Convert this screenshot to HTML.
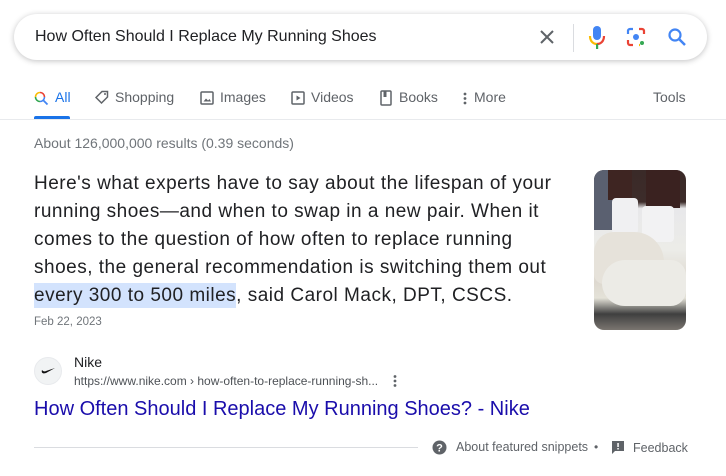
<!DOCTYPE html>
<html><head><meta charset="utf-8"><style>
*{margin:0;padding:0;box-sizing:border-box}
body{width:726px;height:476px;background:#fff;font-family:"Liberation Sans",Arial,sans-serif;position:relative;overflow:hidden;color:#202124}
.abs{position:absolute;white-space:nowrap}
.search{position:absolute;left:14px;top:14px;width:693px;height:46px;border-radius:24px;background:#fff;box-shadow:0 1px 6px rgba(32,33,36,.28)}
.tab{position:absolute;top:89px;font-size:14px;color:#5f6368}
.snip{font-size:19px;letter-spacing:0.5px;color:#202124;line-height:28px}
</style></head><body>
<div class="search"></div>
<div class="abs" style="left:35px;top:28px;font-size:16px;color:#202124">How Often Should I Replace My Running Shoes</div>
<svg class="abs" style="left:538px;top:28px" width="18" height="18" viewBox="0 0 18 18"><path d="M3 3L15 15M15 3L3 15" stroke="#5f6368" stroke-width="2"/></svg>
<div class="abs" style="left:573px;top:24px;width:1px;height:28px;background:#dadce0"></div>
<svg class="abs" style="left:588px;top:25px" width="18" height="26" viewBox="0 0 18 26"><rect x="5" y="1" width="8" height="14" rx="4" fill="#4285f4"/><path d="M2 11c0 5 3 8 7 8" stroke="#fbbc05" stroke-width="2.2" fill="none"/><path d="M16 11c0 5-3 8-7 8" stroke="#ea4335" stroke-width="2.2" fill="none"/><rect x="8" y="19" width="2.2" height="5" fill="#34a853"/></svg>
<svg class="abs" style="left:626px;top:27px" width="20" height="20" viewBox="0 0 20 20"><path d="M2 7V4a2 2 0 0 1 2-2h3" stroke="#4285f4" stroke-width="2.2" fill="none"/><path d="M13 2h3a2 2 0 0 1 2 2v3" stroke="#ea4335" stroke-width="2.2" fill="none"/><path d="M2 13v3a2 2 0 0 0 2 2h3" stroke="#ea4335" stroke-width="2.2" fill="none"/><path d="M13 18h1" stroke="#fbbc05" stroke-width="2.2"/><circle cx="10" cy="10" r="3" fill="#4285f4"/><circle cx="16" cy="16" r="2" fill="#34a853"/></svg>
<svg class="abs" style="left:667px;top:27px" width="20" height="20" viewBox="0 0 20 20"><circle cx="8" cy="8" r="5.5" stroke="#4285f4" stroke-width="2.2" fill="none"/><path d="M12 12l6 6" stroke="#4285f4" stroke-width="2.5"/></svg>

<svg class="abs" style="left:34px;top:91px" width="15" height="15" viewBox="0 0 15 15"><path d="M6 1.5a4.5 4.5 0 0 1 4.5 4.5" stroke="#ea4335" stroke-width="1.6" fill="none"/><path d="M10.5 6A4.5 4.5 0 0 1 6 10.5" stroke="#4285f4" stroke-width="1.6" fill="none"/><path d="M6 10.5A4.5 4.5 0 0 1 1.5 6" stroke="#34a853" stroke-width="1.6" fill="none"/><path d="M1.5 6A4.5 4.5 0 0 1 6 1.5" stroke="#fbbc05" stroke-width="1.6" fill="none"/><path d="M9.5 9.5l4 4" stroke="#4285f4" stroke-width="1.8"/></svg>
<div class="tab" style="left:55px;color:#1a73e8">All</div>
<div class="abs" style="left:34px;top:116px;width:36px;height:3px;background:#1a73e8;border-radius:2px 2px 0 0"></div>
<svg class="abs" style="left:95px;top:90px" width="15" height="15" viewBox="0 0 15 15"><path d="M7 1.5h5.5v5.5l-6 6-5.5-5.5z" stroke="#5f6368" stroke-width="1.5" fill="none"/><circle cx="10" cy="4" r="1" fill="#5f6368"/></svg>
<div class="tab" style="left:115px">Shopping</div>
<svg class="abs" style="left:200px;top:91px" width="14" height="14" viewBox="0 0 14 14"><rect x="1" y="1" width="12" height="12" rx="1" stroke="#5f6368" stroke-width="1.5" fill="none"/><path d="M3.5 10.5l2.5-3 2 2 1.5-1.5 1.5 2.5z" fill="#5f6368"/></svg>
<div class="tab" style="left:220px">Images</div>
<svg class="abs" style="left:291px;top:91px" width="14" height="14" viewBox="0 0 14 14"><rect x="1" y="1" width="12" height="12" rx="1" stroke="#5f6368" stroke-width="1.5" fill="none"/><path d="M5.5 4.5v5l4-2.5z" fill="#5f6368"/></svg>
<div class="tab" style="left:311px">Videos</div>
<svg class="abs" style="left:380px;top:90px" width="12" height="16" viewBox="0 0 12 16"><rect x="1" y="1" width="10" height="14" rx="1" stroke="#5f6368" stroke-width="1.5" fill="none"/><rect x="3.5" y="1" width="3" height="6" fill="#5f6368"/></svg>
<div class="tab" style="left:399px">Books</div>
<svg class="abs" style="left:462px;top:91px" width="6" height="15" viewBox="0 0 6 15"><circle cx="3" cy="3" r="1.4" fill="#5f6368"/><circle cx="3" cy="7.5" r="1.4" fill="#5f6368"/><circle cx="3" cy="12" r="1.4" fill="#5f6368"/></svg>
<div class="tab" style="left:474px">More</div>
<div class="tab" style="left:653px">Tools</div>
<div class="abs" style="left:0;top:119px;width:726px;height:1px;background:#e8eaed"></div>
<div class="abs" style="left:34px;top:135px;font-size:14px;color:#70757a">About 126,000,000 results (0.39 seconds)</div>

<div class="abs snip" style="left:34px;top:170px">Here's what experts have to say about the lifespan of your<br>running shoes—and when to swap in a new pair. When it<br>comes to the question of how often to replace running<br>shoes, the general recommendation is switching them out<br><span style="background:#d3e3fd;padding:2px 0">every 300 to 500 miles</span>, said Carol Mack, DPT, CSCS.</div>
<div class="abs" style="left:34px;top:316px;font-size:11.5px;color:#70757a">Feb 22, 2023</div>

<div class="abs" style="left:594px;top:170px;width:92px;height:160px;border-radius:10px;overflow:hidden;background:linear-gradient(180deg,#3a2a28 0%,#3d2c2a 20%,#e8e8ea 24%,#ecece8 50%,#ddd8cf 70%,#e4e2d8 80%,#3f3f3f 90%,#7a7570 100%)">
<div style="position:absolute;left:0;top:0;width:20px;height:60px;background:#5a6070"></div>
<div style="position:absolute;left:14px;top:0;width:24px;height:30px;background:#3e2522"></div>
<div style="position:absolute;left:52px;top:0;width:34px;height:38px;background:#3a2220"></div>
<div style="position:absolute;left:18px;top:28px;width:26px;height:36px;background:#f0f0f2;border-radius:4px"></div>
<div style="position:absolute;left:48px;top:36px;width:32px;height:36px;background:#f2f2f3;border-radius:4px"></div>
<div style="position:absolute;left:0;top:62px;width:70px;height:52px;background:#e6e2da;border-radius:20px 30px 10px 10px"></div>
<div style="position:absolute;left:8px;top:90px;width:84px;height:46px;background:#ecebe6;border-radius:30px 20px 20px 30px"></div>
</div>

<div class="abs" style="left:34px;top:357px;width:28px;height:28px;border-radius:50%;background:#f1f3f4;border:1px solid #e8eaed"></div>
<svg class="abs" style="left:40px;top:366px" width="16" height="10" viewBox="0 0 16 10"><path d="M2 4c-1 3 1 4 4 3l9-5-9 3c-2 1-3 0-4-1z" fill="#111"/></svg>
<div class="abs" style="left:74px;top:354px;font-size:14px;color:#202124">Nike</div>
<div class="abs" style="left:74px;top:374px;font-size:12px;color:#4d5156">https://www.nike.com › how-often-to-replace-running-sh...</div>
<svg class="abs" style="left:392px;top:374px" width="6" height="14" viewBox="0 0 6 14"><circle cx="3" cy="2.5" r="1.4" fill="#5f6368"/><circle cx="3" cy="7" r="1.4" fill="#5f6368"/><circle cx="3" cy="11.5" r="1.4" fill="#5f6368"/></svg>
<div class="abs" style="left:34px;top:398px;font-size:20px;color:#1a0dab">How Often Should I Replace My Running Shoes? - Nike</div>

<div class="abs" style="left:34px;top:447px;width:384px;height:1px;background:#dadce0"></div>
<svg class="abs" style="left:432px;top:440px" width="15" height="15" viewBox="0 0 15 15"><circle cx="7.5" cy="7.5" r="7" fill="#5f6368"/><text x="7.5" y="11.5" text-anchor="middle" font-size="11" font-weight="bold" fill="#fff" font-family="Liberation Sans">?</text></svg>
<div class="abs" style="left:456px;top:440px;font-size:12.5px;color:#5f6368">About featured snippets</div>
<div class="abs" style="left:594px;top:440px;font-size:12px;color:#5f6368">•</div>
<svg class="abs" style="left:611px;top:440px" width="14" height="15" viewBox="0 0 14 15"><path d="M1 1h12v10H4l-3 3z" fill="#5f6368"/><rect x="6.3" y="3" width="1.5" height="4" fill="#fff"/><rect x="6.3" y="8" width="1.5" height="1.5" fill="#fff"/></svg>
<div class="abs" style="left:633px;top:441px;font-size:12.5px;color:#5f6368">Feedback</div>
</body></html>
